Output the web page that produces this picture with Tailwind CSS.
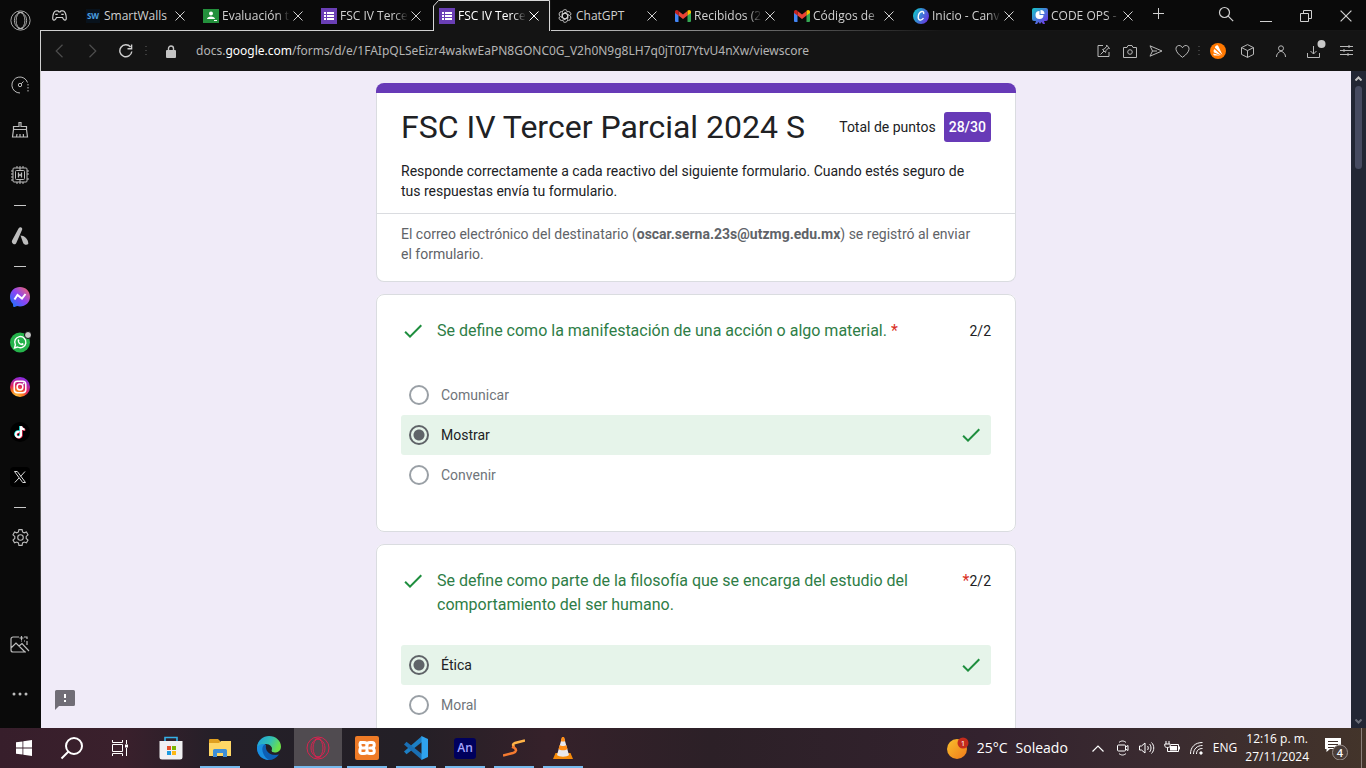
<!DOCTYPE html>
<html lang="es">
<head>
<meta charset="utf-8">
<title>FSC IV Tercer Parcial 2024 S</title>
<script src="https://cdn.jsdelivr.net/npm/@tailwindcss/browser@4"></script>
</head>
<body class="flex h-screen flex-col overflow-hidden bg-[#0a0a0a] font-['Open_Sans','Noto_Sans',sans-serif] text-xs text-[#d0d0d0]">

<!-- Shared symbols -->
<svg class="hidden" aria-hidden="true">
  <symbol id="close" viewBox="0 0 10 10"><path d="M.5.5l9 9M9.500.5l-9 9" fill="none" stroke="currentColor"/></symbol>
  <symbol id="forms" viewBox="0 0 16 16"><path fill="#6a3fb5" d="M0 0h16v16H0z"/><path fill="#fff" d="M3 4h2v2H3zM6 4h7v2H6zM3 7h2v2H3zM6 7h7v2H6zM3 10h2v2H3zM6 10h7v2H6z"/></symbol>
  <symbol id="gmail" viewBox="0 0 16 12"><path fill="#4285f4" d="M0 2v9a1 1 0 0 0 1 1h2.500V4.500z"/><path fill="#34a853" d="M16 2v9a1 1 0 0 1-1 1h-2.500V4.500z"/><path fill="#ea4335" d="M3.500 5.500V1L8 4.400 12.500 1v4.500L8 9z"/><path fill="#c5221f" d="M0 2C0 .2 1.900-.6 3.500.8v4.700L0 3z"/><path fill="#fbbc04" d="M16 2c0-1.800-1.900-2.600-3.500-1.200v4.700L16 3z"/></symbol>
  <symbol id="tick" viewBox="0 0 24 24"><path fill="#1e8e3e" d="M9 16.200 4.800 12l-1.400 1.400L9 19 21 7l-1.400-1.400z"/></symbol>
  <symbol id="opera" viewBox="0 0 24 24"><g fill="none" stroke="currentColor"><circle cx="12" cy="12" r="11"/><ellipse cx="12" cy="12" rx="5" ry="9"/><path d="M9 3.500C12.500.8 19 5 19 12s-6.500 11.200-10 8.500M15 3.500C11.500.8 5 5 5 12s6.500 11.200 10 8.500"/></g></symbol>
</svg>

<div class="flex min-h-0 flex-1">

  <!-- Browser sidebar -->
  <aside class="flex w-10 shrink-0 flex-col items-center text-[#bdbdbd]">
    <button aria-label="Opera" class="mb-[22px] grid h-10 place-items-center"><svg class="size-[21px]"><use href="#opera"/></svg></button>
    <button aria-label="GX Control" class="grid h-[45px] place-items-center"><svg class="size-[18px]" viewBox="0 0 18 18" fill="none" stroke="currentColor"><path d="M9 17A8 8 0 1 1 16.500 6.500"/><path d="M17 8v8" stroke-dasharray="1.500 1.500"/><circle cx="9" cy="9" r="1.700"/><path d="m10.200 7.800 2.300-2.300"/></svg></button>
    <button aria-label="GX Cleaner" class="grid h-[45px] place-items-center"><svg class="size-[18px]" viewBox="0 0 18 18" fill="none" stroke="currentColor" stroke-width="1.200"><path d="M2.500 8.500v-3H8v-4h2v4h5.500v3M2.500 8.500h13M2.500 8.500l-1 7.500h15l-1-7.500M5.500 16l.5-3M9 16v-3M12.500 16l-.2-3"/></svg></button>
    <button aria-label="Límites de recursos" class="grid h-[45px] place-items-center"><svg class="size-5" viewBox="0 0 20 20" fill="none" stroke="currentColor"><rect x="3" y="3" width="14" height="14" rx="1"/><rect x="5.500" y="5.500" width="9" height="9" rx="1"/><path d="M7 1v2M10 1v4M13 1v2M7 17v2M10 15v4M13 17v2M1 6h2M1 9h2M1 12h2M1 15h2M17 6h2M17 9h2M17 14h2"/><path d="M8.500 7.500v5M11.500 7.500v5M8.500 10h3" stroke-width="1.300"/></svg></button>
    <div class="grid h-4 place-items-center"><span class="h-px w-3 bg-[#c8c8c8]"></span></div>
    <button aria-label="Aria" class="grid h-[46px] place-items-center"><svg class="size-[18px]" viewBox="0 0 18 18" fill="#bdbdbd"><path d="M8.500.6c1.700-.9 3.200.5 2.600 2.200L5.300 16c-.8 1.800-2.800 1.700-4-.1-.6-.9-.6-1.600-.1-2.600L7.500 1.500z"/><path d="M9.500 8.500c3.500 0 8 3.400 7.800 8.600-1.500 1.300-4.300.9-5.200-1.300z"/></svg></button>
    <div class="grid h-[15px] place-items-center"><span class="h-px w-3 bg-[#c8c8c8]"></span></div>
    <button aria-label="Messenger" class="grid h-[45px] place-items-center"><svg class="size-5" viewBox="0 0 20 20"><defs><linearGradient id="ms" x1="0" y1="1" x2="1" y2="0"><stop offset="0" stop-color="#0a7cff"/><stop offset=".5" stop-color="#8b45f5"/><stop offset="1" stop-color="#ff6a5c"/></linearGradient></defs><path fill="url(#ms)" d="M10 0c5.600 0 10 4.100 10 9.700s-4.400 9.700-10 9.700c-1 0-2-.1-2.900-.4L4.500 20C3.300 20.300 3 19.500 3 17 1.100 15.300 0 12.700 0 9.700 0 4.100 4.400 0 10 0z"/><path fill="none" stroke="#fff" stroke-width="2" d="m4.500 12.500 3-4.500 4.500 3.500 3.500-4.500"/></svg></button>
    <button aria-label="WhatsApp" class="grid h-[45px] place-items-center"><svg class="size-[22px]" viewBox="0 0 22 22"><circle cx="11" cy="11.500" r="10" fill="#25b34b"/><path fill="none" stroke="#fff" stroke-width="1.400" d="m5.500 17 .9-3.200a5.600 5.600 0 1 1 2.200 2.200z"/><path fill="#fff" d="M8.800 8.500c.8-.8 1.200 0 1.600 1 .2.400-.5.900-.5 1.100.5 1 1.300 1.700 2.200 2.100.3 0 .7-1 1.200-.7 1.700.8 1.500 1 1 1.700-1.800 2-6.600-1.800-5.500-5.200z"/><circle cx="19" cy="4" r="3.500" fill="#c8c8c8" stroke="#0a0a0a"/></svg></button>
    <button aria-label="Instagram" class="grid h-[45px] place-items-center"><svg class="size-5" viewBox="0 0 20 20"><defs><radialGradient id="ig" cx=".3" cy="1" r="1"><stop offset="0" stop-color="#ffcf4a"/><stop offset=".35" stop-color="#fa7a1e"/><stop offset=".6" stop-color="#e0245e"/><stop offset="1" stop-color="#8a2be2"/></radialGradient></defs><circle cx="10" cy="10" r="10" fill="url(#ig)"/><g fill="none" stroke="#fff" stroke-width="1.500"><rect x="4.200" y="4.200" width="11.600" height="11.600" rx="3.200"/><circle cx="10" cy="10" r="2.900"/></g><circle cx="13.500" cy="6.500" r=".9" fill="#fff"/></svg></button>
    <button aria-label="TikTok" class="grid h-[45px] place-items-center"><svg class="size-5" viewBox="0 0 20 20"><circle cx="10" cy="10" r="10" fill="#000"/><g fill="none" stroke-width="2"><path stroke="#25f4ee" d="M9 9.500a2.700 2.700 0 1 0 1.200 4V4c.2 1.800 1.500 3 3.600 3.200"/><path stroke="#fe2c55" d="M10 10.500a2.700 2.700 0 1 0 1.700 3V4.700c.2 1.800 1.500 3 3.600 3.200"/><path stroke="#fff" d="M9.500 10a2.700 2.700 0 1 0 1.500 3.500V4.200c.2 1.800 1.500 3 3.600 3.200"/></g></svg></button>
    <button aria-label="X" class="grid h-[45px] place-items-center"><svg class="size-5" viewBox="0 0 20 20"><rect width="20" height="20" rx="4" fill="#000"/><path fill="none" stroke="#ddd" d="M4.500 4.500h2.800l8.200 11h-2.800zM15 4.500l-4.500 5M9 11l-4.200 4.500"/></svg></button>
    <div class="grid h-4 place-items-center"><span class="h-px w-3 bg-[#c8c8c8]"></span></div>
    <button aria-label="Configuración" class="grid h-[45px] place-items-center"><svg class="size-[19px]" viewBox="0 0 24 24" fill="none" stroke="currentColor" stroke-width="1.400"><circle cx="12" cy="12" r="3.500"/><path d="M10 2h4l.6 3 2 1.100 2.900-1 2 3.500-2.300 2v2.600l2.300 2-2 3.500-2.900-1-2 1.200-.6 3.100h-4l-.6-3.100-2-1.200-2.900 1-2-3.500 2.300-2v-2.600l-2.300-2 2-3.500 2.900 1L9.400 5z"/></svg></button>
    <div class="flex-1"></div>
    <button aria-label="Fondos" class="grid h-[45px] place-items-center"><svg class="size-5" viewBox="0 0 20 20" fill="none" stroke="currentColor" stroke-width="1.200"><path d="M9 2H3a2 2 0 0 0-2 2v11a2 2 0 0 0 2 2h13M1 13l5-5 9 9M9 11l3-2.500 7 7.500M11.500 1v4M9.500 3h4M14 2h3v2M17 6v4M11 6h1M14 6h1"/></svg></button>
    <button aria-label="Más" class="mb-[7px] grid h-[54px] place-items-center"><svg class="h-1 w-4" viewBox="0 0 16 4" fill="currentColor"><circle cx="2" cy="2" r="1.500"/><circle cx="8" cy="2" r="1.500"/><circle cx="14" cy="2" r="1.500"/></svg></button>
  </aside>

  <div class="flex min-w-0 flex-1 flex-col">

    <!-- Tab strip -->
    <nav aria-label="Pestañas" class="flex h-[31px] shrink-0 bg-[linear-gradient(to_right,#cfcfcf_38%,#161616_68%)] bg-[length:100%_1px] bg-bottom bg-no-repeat">
      <button aria-label="GX Corner" class="grid w-[39px] place-items-center"><svg class="h-[11px] w-[15px]" viewBox="0 0 15 11" fill="none" stroke="#cfcfcf" stroke-width="1.200"><path d="M4 .8h2l.8 1h1.400L9 .8h2c2 0 3.300 4.200 3.300 7.400 0 2.200-2 2.600-3 .8L10.500 7.500h-6L3.700 9c-1 1.800-3 1.400-3-.8C.7 5 2 .8 4 .8z"/><path d="M3.300 4.300h2.400M9.300 4.300h2.400"/></svg></button>

      <div class="flex w-[118px] items-center gap-[3px] pr-3 pl-1.5">
        <svg class="size-4 shrink-0" viewBox="0 0 16 16"><path fill="#08121c" d="M1 1h14v14H1z"/><text x="8" y="11" text-anchor="middle" font-family="Open Sans" font-size="8" font-weight="700" fill="#4a9fe0">SW</text></svg>
        <a href="#" class="w-[66px] overflow-hidden whitespace-nowrap">SmartWalls</a>
        <button aria-label="Cerrar" class="ml-auto"><svg class="size-2.5"><use href="#close"/></svg></button>
      </div>
      <div class="flex w-[118px] items-center gap-[3px] pr-3 pl-1.5">
        <svg class="size-4 shrink-0" viewBox="0 0 16 16"><path fill="#23903c" d="M0 1h16v14H0z"/><circle cx="8" cy="5.500" r="2" fill="#fff"/><path fill="#fff" d="M4 11c0-3.500 8-3.500 8 0zM11 12h3v1h-3z"/></svg>
        <a href="#" class="w-[70px] overflow-hidden mask-r-from-80% whitespace-nowrap">Evaluación t</a>
        <button aria-label="Cerrar" class="ml-auto"><svg class="size-2.5"><use href="#close"/></svg></button>
      </div>
      <div class="flex w-[118px] items-center gap-[3px] pr-3 pl-1.5">
        <svg class="size-4 shrink-0"><use href="#forms"/></svg>
        <a href="#" class="w-[70px] overflow-hidden mask-r-from-80% whitespace-nowrap">FSC IV Terce</a>
        <button aria-label="Cerrar" class="ml-auto"><svg class="size-2.5"><use href="#close"/></svg></button>
      </div>
      <div class="relative flex w-[118px] items-center gap-[3px] bg-[#141414] pr-3 pl-1.5 text-white">
        <svg class="absolute inset-0 h-[31px] w-[118px]" viewBox="0 0 118 31"><path fill="#0a0a0a" d="M0 0h6L0 6z"/><path fill="none" stroke="#d8d8d8" d="M.5 31V6l5-5.500h111V31"/></svg>
        <svg class="size-4 shrink-0"><use href="#forms"/></svg>
        <a href="#" aria-current="page" class="w-[70px] overflow-hidden mask-r-from-80% whitespace-nowrap">FSC IV Terce</a>
        <button aria-label="Cerrar" class="ml-auto"><svg class="size-2.5"><use href="#close"/></svg></button>
      </div>
      <div class="flex w-[118px] items-center gap-[3px] pr-3 pl-1.5">
        <svg class="size-4 shrink-0" viewBox="-1 -1 18 18" fill="none" stroke="#cfcfcf"><g id="petal"><path d="M5 9V4a3 3 0 0 1 5.500-1.800M5 6.300l3-1.800 3.500 2"/></g><use href="#petal" transform="rotate(60 8 8)"/><use href="#petal" transform="rotate(120 8 8)"/><use href="#petal" transform="rotate(180 8 8)"/><use href="#petal" transform="rotate(240 8 8)"/><use href="#petal" transform="rotate(300 8 8)"/></svg>
        <a href="#" class="w-[66px] overflow-hidden whitespace-nowrap">ChatGPT</a>
        <button aria-label="Cerrar" class="ml-auto"><svg class="size-2.5"><use href="#close"/></svg></button>
      </div>
      <div class="flex w-[118px] items-center gap-[3px] pr-3 pl-1.5">
        <svg class="h-3 w-4 shrink-0"><use href="#gmail"/></svg>
        <a href="#" class="w-[70px] overflow-hidden mask-r-from-80% whitespace-nowrap">Recibidos (2</a>
        <button aria-label="Cerrar" class="ml-auto"><svg class="size-2.5"><use href="#close"/></svg></button>
      </div>
      <div class="flex w-[118px] items-center gap-[3px] pr-[11px] pl-[7px]">
        <svg class="h-3 w-4 shrink-0"><use href="#gmail"/></svg>
        <a href="#" class="w-[70px] overflow-hidden mask-r-from-80% whitespace-nowrap">Códigos de</a>
        <button aria-label="Cerrar" class="ml-auto"><svg class="size-2.5"><use href="#close"/></svg></button>
      </div>
      <div class="flex w-[118px] items-center gap-[3px] pr-[9px] pl-2">
        <svg class="size-4 shrink-0" viewBox="0 0 16 16"><defs><linearGradient id="cv" x1="0" y1=".3" x2="1" y2=".8"><stop offset="0" stop-color="#12c4cc"/><stop offset="1" stop-color="#6c2be0"/></linearGradient></defs><circle cx="8" cy="8" r="8" fill="url(#cv)"/><path d="M10.500 6c.8-1.600-.2-2.700-1.600-2.500C6.500 3.900 5 7 5.200 9.500c.2 3.200 3.300 3.400 5.300.7" fill="none" stroke="#fff" stroke-width="1.400"/></svg>
        <a href="#" class="w-[70px] overflow-hidden mask-r-from-80% whitespace-nowrap">Inicio - Canv</a>
        <button aria-label="Cerrar" class="ml-auto"><svg class="size-2.5"><use href="#close"/></svg></button>
      </div>
      <div class="flex w-[118px] items-center gap-[3px] pr-2 pl-[9px]">
        <svg class="size-4 shrink-0" viewBox="0 0 16 16"><defs><linearGradient id="co" x1="0" y1="0" x2="1" y2="1"><stop offset="0" stop-color="#14c8c8"/><stop offset="1" stop-color="#7a2be8"/></linearGradient></defs><path fill="url(#co)" d="M2 0h12a2 2 0 0 1 2 2v9a2 2 0 0 1-2 2h-2l1 3h-2l-1.500-2-1.500 2-1.500-2L5 16H3l1-3H2a2 2 0 0 1-2-2V2a2 2 0 0 1 2-2z"/><path fill="#fff" d="M7.500 3v4h4a4 4 0 1 1-4-4zM8.500 2a4 4 0 0 1 4 4h-4z"/></svg>
        <a href="#" class="w-[70px] overflow-hidden mask-r-from-80% whitespace-nowrap">CODE OPS -</a>
        <button aria-label="Cerrar" class="ml-auto"><svg class="size-2.5"><use href="#close"/></svg></button>
      </div>
      <button aria-label="Nueva pestaña" class="grid w-[34px] place-items-center pb-1"><svg class="size-[11px]" viewBox="0 0 11 11" stroke="currentColor"><path d="M5.500 0v11M0 5.500h11"/></svg></button>
      <div class="ml-auto flex">
        <button aria-label="Buscar pestañas" class="grid w-10 place-items-center pb-1"><svg class="size-4" viewBox="0 0 16 16" fill="none" stroke="currentColor" stroke-width="1.200"><circle cx="6.500" cy="6.500" r="5"/><path d="m10.200 10.200 5 5"/></svg></button>
        <button aria-label="Minimizar" class="grid w-10 place-items-center"><svg class="size-3" viewBox="0 0 12 12" stroke="currentColor"><path d="M0 11.500h12"/></svg></button>
        <button aria-label="Restaurar" class="grid w-10 place-items-center"><svg class="size-3" viewBox="0 0 12 12" fill="none" stroke="currentColor"><path d="M.5 3.500h8v8h-8zM3.500 3.500v-3h8v8h-3"/></svg></button>
        <button aria-label="Cerrar ventana" class="grid w-10 place-items-center"><svg class="size-3"><use href="#close"/></svg></button>
      </div>
    </nav>

    <div class="flex min-h-0 flex-1">
      <div class="w-px shrink-0 bg-linear-to-b from-[#cfcfcf] from-5% via-[#8a8a8a] via-60% to-[#0a0a0a] to-90%"></div>
      <div class="flex min-w-0 flex-1 flex-col">

        <!-- Address bar -->
        <header class="flex h-10 shrink-0 items-center bg-[#141414]">
          <div class="flex items-center pl-3.5">
            <button aria-label="Atrás" class="mr-[26px] text-[#4d4d4d]"><svg class="h-3.5 w-2" viewBox="0 0 8 14" fill="none" stroke="currentColor" stroke-width="1.200"><path d="M7.500.8 1.200 7l6.300 6.200"/></svg></button>
            <button aria-label="Adelante" class="mr-[22px] text-[#4d4d4d]"><svg class="h-3.5 w-2" viewBox="0 0 8 14" fill="none" stroke="currentColor" stroke-width="1.200"><path d="M.5.8 6.800 7 .5 13.200"/></svg></button>
            <button aria-label="Recargar"><svg class="size-[14px]" viewBox="0 0 14 14" fill="none" stroke="currentColor" stroke-width="1.400"><path d="M12.800 7.500A6 6 0 1 1 11.500 3M12.600.5v4.200H8.500"/></svg></button>
            <svg class="ml-3 h-3 w-0.5" viewBox="0 0 2 12" fill="#3c3c3c"><path d="M0 1h2v1H0zM0 5h2v1H0zM0 9h2v1H0z"/></svg>
            <svg class="mr-5 ml-[19px] h-[13px] w-2.5" viewBox="0 0 10 13"><path fill="none" stroke="#c4c4c4" stroke-width="1.400" d="M2.500 6V3.500a2.500 2.500 0 0 1 5 0V6"/><rect y="5" width="10" height="8" rx="1" fill="#c4c4c4"/></svg>
          </div>
          <div class="min-w-0 flex-1 font-['Noto_Sans','Open_Sans',sans-serif] whitespace-nowrap text-[#b4b4b4]">docs.<span class="text-white">google.com</span>/forms/d/e/1FAIpQLSeEizr4wakwEaPN8GONC0G_V2h0N9g8LH7q0jT0I7YtvU4nXw/viewscore</div>
          <div class="flex items-center text-[#b9b9b9]">
            <button aria-label="Anclar" class="grid w-[26px] place-items-center"><svg class="size-3.5" viewBox="0 0 14 14" fill="none" stroke="currentColor"><path d="M6 1.500H1v11h11V8M3.500 10.500 7 7M5.500 5.500l3 3 .5-2L11.500 4l1 .5-3-3.500.3 1.200L7.300 5z"/></svg></button>
            <button aria-label="Captura" class="grid w-[26px] place-items-center"><svg class="h-[13px] w-3.5" viewBox="0 0 14 13" fill="none" stroke="currentColor"><path d="M.5 2.500H4l1-2h4l1 2h3.500v10H.5z"/><circle cx="7" cy="7" r="2.300"/></svg></button>
            <button aria-label="Mi Flow" class="grid w-[26px] place-items-center"><svg class="h-3 w-3.5" viewBox="0 0 14 12" fill="none" stroke="currentColor"><path d="M1 .8 13 6 1 11.200 3.500 6zM3.500 6H8"/></svg></button>
            <button aria-label="Favorito" class="grid w-[26px] place-items-center"><svg class="h-[13px] w-[15px]" viewBox="0 0 15 13" fill="none" stroke="currentColor"><path d="M7.500 12.300C-2 5.800.8.5 4 .5c1.700 0 2.900 1 3.500 2.300C8.100 1.500 9.300.5 11 .5c3.200 0 6 5.300-3.500 11.800z"/></svg></button>
            <svg class="mr-2.5 ml-[3px] h-3 w-0.5" viewBox="0 0 2 12" fill="#3c3c3c"><path d="M0 1h2v1H0zM0 5h2v1H0zM0 9h2v1H0z"/></svg>
            <button aria-label="Avast"><svg class="size-4" viewBox="0 0 16 16"><circle cx="8" cy="8" r="8" fill="#ff7800"/><path fill="#fff" d="M6.500 2.500c.9-.6 1.700.2 2 1L12.500 12 5 4.800c-.2-.8.3-1.700 1.500-2.300zM4.500 6l7 6.500-7.500-3C3.300 8 3.500 6.700 4.500 6zM3.500 10.500l7 2H4.500c-.9 0-1.400-1-1-2z"/></svg></button>
            <button aria-label="Extensiones" class="ml-[15px]"><svg class="h-3.5 w-[13px]" viewBox="0 0 13 14" fill="none" stroke="currentColor"><path d="m6.500.6 6 3v6.800l-6 3-6-3V3.600zM.5 3.600l6 3 6-3M6.500 6.600v6.800"/></svg></button>
            <button aria-label="Perfil" class="ml-[22px]"><svg class="h-3 w-2.5" viewBox="0 0 10 12" fill="none" stroke="currentColor"><circle cx="5" cy="3.300" r="2.500"/><path d="M.5 12C.5 9 2 7.500 5 6c3 1.500 4.500 3 4.500 6"/></svg></button>
            <button aria-label="Descargas" class="ml-5 pb-1"><svg class="h-5 w-[20px]" viewBox="0 0 20 20" fill="none" stroke="currentColor"><path d="M1.500 14v4.500h12V14M7.500 7v8M4.500 12l3 3 3-3"/><circle cx="15.500" cy="5" r="4" fill="#c8c8c8" stroke="none"/></svg></button>
            <button aria-label="Ajustes rápidos" class="mr-[13px] ml-[14px]"><svg class="h-3 w-[13px]" viewBox="0 0 13 12" fill="none" stroke="currentColor"><path d="M0 1.500h13M0 5.500h13M0 9.500h13M9 0v3M4 4v3M8 8v3"/></svg></button>
          </div>
        </header>

        <!-- Page -->
        <div class="flex min-h-0 flex-1 bg-[#f0ebf8]">
          <main class="relative min-w-0 flex-1 overflow-hidden font-[Roboto,sans-serif] text-sm text-[#202124]">
            <form class="mx-auto flex w-full max-w-[640px] flex-col gap-3 pt-3">

              <section>
                <div class="h-2.5 rounded-t-lg bg-[#673ab7]"></div>
                <div class="rounded-b-lg border border-t-0 border-[#dadce0] bg-white">
                  <div class="border-b border-[#dadce0] px-6 pt-3.5 pb-3">
                    <div class="flex h-10 items-center">
                      <h1 class="flex-1 text-[32px] leading-10">FSC IV Tercer Parcial 2024 S</h1>
                      <span class="mr-2">Total de puntos</span>
                      <span class="rounded-[3px] bg-[#673ab7] px-[5px] py-[5px] leading-5 font-medium text-white">28/30</span>
                    </div>
                    <p class="mt-3.5 pr-5 leading-5">Responde correctamente a cada reactivo del siguiente formulario. Cuando estés seguro de tus respuestas envía tu formulario.</p>
                  </div>
                  <p class="pt-2.5 pr-11 pb-[17px] pl-6 leading-5 text-[#5f6368]">El correo electrónico del destinatario (<b>oscar.serna.23s@utzmg.edu.mx</b>) se registró al enviar el formulario.</p>
                </div>
              </section>

              <fieldset class="rounded-lg border border-[#dadce0] bg-white px-6 pt-6 pb-9">
                <div class="flex min-h-7 items-start">
                  <svg class="mr-3 size-6 shrink-0" role="img" aria-label="Correcta"><use href="#tick"/></svg>
                  <h2 class="flex-1 text-base text-[#2e7d46]">Se define como la manifestación de una acción o algo material. <span class="text-[#d93025]">*</span></h2>
                  <span class="leading-6">2/2</span>
                </div>
                <div class="mt-7">
                  <label class="flex h-10 items-center gap-3 px-2 text-[#70757a]"><input type="radio" name="q1" disabled class="size-5 appearance-none rounded-full border-2 border-[#9aa0a6]">Comunicar</label>
                  <label class="flex h-10 items-center gap-3 rounded-[3px] bg-[#e6f4ea] px-2"><input type="radio" name="q1" checked disabled class="size-5 appearance-none rounded-full border-2 border-[#5f6368] bg-[radial-gradient(circle,#5f6368_5px,transparent_6px)]">Mostrar<svg class="ml-auto size-6"><use href="#tick"/></svg></label>
                  <label class="flex h-10 items-center gap-3 px-2 text-[#70757a]"><input type="radio" name="q1" disabled class="size-5 appearance-none rounded-full border-2 border-[#9aa0a6]">Convenir</label>
                </div>
              </fieldset>

              <fieldset class="rounded-lg border border-[#dadce0] bg-white px-6 pt-6 pb-9">
                <div class="flex min-h-7 items-start">
                  <svg class="mr-3 size-6 shrink-0" role="img" aria-label="Correcta"><use href="#tick"/></svg>
                  <h2 class="flex-1 text-base text-[#2e7d46]">Se define como parte de la filosofía que se encarga del estudio del comportamiento del ser humano.</h2>
                  <span class="ml-10 leading-6"><span class="text-base text-[#d93025]">*</span>2/2</span>
                </div>
                <div class="mt-7">
                  <label class="flex h-10 items-center gap-3 rounded-[3px] bg-[#e6f4ea] px-2"><input type="radio" name="q2" checked disabled class="size-5 appearance-none rounded-full border-2 border-[#5f6368] bg-[radial-gradient(circle,#5f6368_5px,transparent_6px)]">Ética<svg class="ml-auto size-6"><use href="#tick"/></svg></label>
                  <label class="flex h-10 items-center gap-3 px-2 text-[#70757a]"><input type="radio" name="q2" disabled class="size-5 appearance-none rounded-full border-2 border-[#9aa0a6]">Moral</label>
                </div>
              </fieldset>
            </form>
            <button aria-label="Informar de un problema" class="absolute bottom-[18px] left-3.5"><svg class="size-5" viewBox="0 0 20 20"><path fill="#706d76" d="M1.500 0h17A1.500 1.500 0 0 1 20 1.500v13a1.500 1.500 0 0 1-1.500 1.500H4l-4 4V1.500A1.500 1.500 0 0 1 1.500 0z"/><path fill="#fff" d="M9 4h2v4H9zM9 10h2v2H9z"/></svg></button>
          </main>

          <!-- Scrollbar -->
          <div class="flex w-[15px] shrink-0 flex-col items-center bg-[#222634] pt-[5px] pb-1">
            <svg class="h-[5px] w-[7px]" viewBox="0 0 7 5" fill="none" stroke="#c0c0c0" stroke-width="2"><path d="m.5 4.500 3-3 3 3"/></svg>
            <div class="mt-[5px] h-[83px] w-[7px] rounded-full bg-[#464a60]"></div>
            <svg class="mt-auto h-[5px] w-[7px]" viewBox="0 0 7 5" fill="none" stroke="#6a6d78" stroke-width="2"><path d="m.5.5 3 3 3-3"/></svg>
          </div>
        </div>
      </div>
    </div>
  </div>
</div>

<!-- Windows taskbar -->
<footer class="flex h-10 shrink-0 items-center bg-[linear-gradient(to_right,#371e2b_0%,#3a202c_9%,#241f28_16%,#231f26_30%,#35212a_40%,#2c2027_52%,#33222e_72%,#3a2b30_85%,#43342a_100%)] text-white">
  <div class="flex h-full">
    <button aria-label="Inicio" class="grid w-12 place-items-center"><svg class="size-4" viewBox="0 0 16 16" fill="#fff"><path d="M0 2.300 6.500 1.400v6.200H0zM7.300 1.200 16 0v7.600H7.300zM0 8.400h6.500v6.200L0 13.700zM7.300 8.400H16V16l-8.700-1.200z"/></svg></button>
    <button aria-label="Buscar" class="grid w-12 place-items-center"><svg class="size-6" viewBox="0 0 24 24" fill="none" stroke="#fff" stroke-width="2"><circle cx="14" cy="10" r="8"/><path d="M8.500 15.500 1.500 22.500"/></svg></button>
    <button aria-label="Vista de tareas" class="mr-[3px] grid w-12 place-items-center"><svg class="size-4" viewBox="0 0 16 16" fill="none" stroke="#fff"><path d="M.5 0v2.500h10V0M.5 16v-2.500h10V16M.5 4.500h10v7H.5zM14.500 0v4M14.500 8v8"/><path d="M13 4.500h3v3h-3z" fill="#fff" stroke="none"/></svg></button>
  </div>
  <div class="flex h-full gap-px">
    <button aria-label="Microsoft Store" class="grid w-12 place-items-center"><svg class="size-6" viewBox="0 0 24 24"><path fill="none" stroke="#35b1e8" stroke-width="1.600" d="M6 6V1.500h12V6"/><path fill="#f0f0f2" d="M.5 5h23v16a2.500 2.500 0 0 1-2.500 2.500H3A2.500 2.500 0 0 1 .5 21z"/><path fill="#e5502a" d="M8 10h4v4H8z"/><path fill="#7db700" d="M13 10h4v4h-4z"/><path fill="#1c9be0" d="M8 15h4v4H8z"/><path fill="#fdb813" d="M13 15h4v4h-4z"/></svg></button>
    <button aria-label="Explorador de archivos" class="grid w-12 grid-rows-[1fr_2px] place-items-center"><svg class="mt-0.5 size-[22px]" viewBox="0 0 22 22"><path fill="#e0a020" d="M0 3a1 1 0 0 1 1-1h8l2 2v3H0z"/><path fill="#ffd766" d="M0 6h10l2-2h10v15H0z"/><path fill="#3f8fd8" d="M4 20v-6.500A1.500 1.500 0 0 1 5.500 12h11a1.500 1.500 0 0 1 1.500 1.500V20h-4v-4H8v4z"/></svg><span class="h-0.5 w-10 bg-[#76b9ed]"></span></button>
    <button aria-label="Edge" class="grid w-12 place-items-center"><svg class="size-6" viewBox="0 0 24 24"><defs><linearGradient id="e1" x1="0" y1="0" x2="1" y2=".4"><stop offset="0" stop-color="#1b9de2"/><stop offset=".6" stop-color="#35c1b0"/><stop offset="1" stop-color="#6be04a"/></linearGradient></defs><path fill="#0d5fb4" d="M0 12c0-3 1-6 3-8l6 5c-1 6 3 11 13 9.500C19.500 22 16 24 12 24 5 24 0 19 0 12z"/><path fill="url(#e1)" d="M0 11C.8 4.500 6 0 12 0c7 0 12 5 12 10.500 0 4-3 6-6.500 6-3 0-4-1.200-3-2.500C16 11.500 13 8 9 8c-4 0-7 1.500-9 3z"/><path fill="#1a8fe0" d="M0 11c2-2.500 5-3.500 8-3-3 2-3.500 6-1.500 10 1 2.500 3 4.500 5.500 6C5 24-.5 18 0 11z"/><path fill="#242027" d="M11 10c-1.500 4 .5 8 5 8.500 2.500.3 4.500-.5 6.500-2-2.500 1.300-8.500.5-8-2.500 1-1.500 0-4-3.500-4z"/></svg></button>
    <button aria-label="Opera GX" class="grid w-12 grid-rows-[1fr_2px] place-items-center bg-[#504b50] text-[#d8234f]"><svg class="mt-0.5 size-6"><use href="#opera"/></svg><span class="h-0.5 w-12 bg-[#76b9ed]"></span></button>
    <button aria-label="XAMPP" class="grid w-12 grid-rows-[1fr_2px] place-items-center"><svg class="mt-0.5 size-6" viewBox="0 0 24 24"><rect width="24" height="24" rx="2" fill="#ee7a26"/><path fill="none" stroke="#fff" stroke-width="3" stroke-linejoin="round" stroke-linecap="round" d="M5.500 6.500H9c2 0 3 1 3 2.500S11 12 9 12H6.500c-2 0-2.500 5.500 0 5.500H9c2 0 3-1 3-2.500v-6c0-1.500 1-2.500 3-2.500h2c3 0 3 5 0 5.500h-2M17 12c3 .5 3 5.500 0 5.500h-2c-2 0-3-1-3-2.500M5.500 6.500C4.500 8.500 5 11 6.500 12"/></svg><span class="h-0.5 w-10 bg-[#76b9ed]"></span></button>
    <button aria-label="Visual Studio Code" class="grid w-12 grid-rows-[1fr_2px] place-items-center"><svg class="mt-0.5 size-6" viewBox="0 0 24 24"><path fill="#1d7fc4" d="M18 0 0 15.500l2.500 2.800L18 6z"/><path fill="#1a6fb4" d="M18 24 0 8.500l2.500-2.800L18 18z"/><path fill="#2fa3ee" d="M17.500 0 24 3v18l-6.500 3z"/></svg><span class="h-0.5 w-10 bg-[#76b9ed]"></span></button>
    <button aria-label="Adobe Animate" class="grid w-12 grid-rows-[1fr_2px] place-items-center"><span class="mt-0.5 grid h-[21px] w-[22px] place-items-center rounded-[3px] bg-[#00005c] font-semibold text-[#a6a4ff]">An</span><span class="h-0.5 w-10 bg-[#76b9ed]"></span></button>
    <button aria-label="Sublime Text" class="grid w-12 grid-rows-[1fr_2px] place-items-center"><svg class="mt-0.5 h-[18px] w-[22px]" viewBox="0 0 22 18" fill="none"><path stroke="#ffb347" stroke-width="2.600" d="M22 1.500 12 4c-2.500.8-2.500 3-.5 4"/><path stroke="#f47a30" stroke-width="2.600" d="M0 16.500 10 14c3.500-1 4-3.500 1-5.500l-2-.8"/></svg><span class="h-0.5 w-10 bg-[#76b9ed]"></span></button>
    <button aria-label="VLC" class="grid w-12 grid-rows-[1fr_2px] place-items-center"><svg class="mt-0.5 h-[22px] w-5" viewBox="0 0 20 22"><path fill="#f58a0a" d="M2.500 16h15l2.500 6H0z"/><path fill="#e8e8ec" d="M9 .5h2L16 18c-2 2.300-10 2.300-12 0z"/><path fill="#ff8c14" d="M9 0h2l1.200 4c-1 .8-3.400.8-4.400 0zM6.700 8c1.500 1.300 5.100 1.300 6.600 0l1.200 4c-2 1.700-7 1.700-9 0z"/></svg><span class="h-0.5 w-10 bg-[#76b9ed]"></span></button>
  </div>

  <div class="ml-auto flex h-full items-center">
    <button class="flex items-center gap-2 text-sm"><svg class="h-[22px] w-[22px]" viewBox="0 0 22 22"><defs><linearGradient id="sun" x1="0" y1="0" x2="1" y2="1"><stop offset="0" stop-color="#f9bf2c"/><stop offset="1" stop-color="#ef7a1a"/></linearGradient></defs><circle cx="10" cy="12" r="10" fill="url(#sun)"/><circle cx="16" cy="6" r="5.500" fill="#c42b1c"/><text x="16" y="9" text-anchor="middle" font-family="Open Sans" font-size="8" fill="#fff">1</text></svg><span class="flex gap-2"><span>25°C</span><span>Soleado</span></span></button>
    <button aria-label="Mostrar iconos ocultos" class="ml-6"><svg class="h-[7px] w-3" viewBox="0 0 12 7" fill="none" stroke="#fff" stroke-width="1.200"><path d="m.5 6.500L6 1l5.500 5.500"/></svg></button>
    <div class="ml-[11px] flex items-center gap-2">
      <svg class="h-4 w-4" viewBox="0 0 16 16" fill="none" stroke="#fff"><path d="M4 2.500C6 .5 9 .5 11 2.500M4 13.500c2 2 5 2 7 0"/><rect x="2.500" y="5" width="8" height="6" rx="1"/><path d="m10.500 7 2.500-1.500v5L10.500 9z"/></svg>
      <svg class="h-4 w-[17px]" viewBox="0 0 17 16" fill="none" stroke="#fff"><path d="M.5 6h2L6 3v10L2.500 10h-2zM8.500 6c1 1 1 3 0 4M10.500 4c2 2 2 6 0 8M12.500 2.500c3 3 3 8 0 11"/></svg>
      <svg class="h-3.5 w-4" viewBox="0 0 16 14" fill="none" stroke="#fff"><path d="M2 0v3M5 0v3M.8 3h5.400v2c0 2-5.400 2-5.400 0zM3.500 6.500v4H5M7 3.500h7.500v7h-10"/><path fill="#fff" stroke="none" d="M6 5h7v4.500H6zM15 5.500h1v3h-1z"/></svg>
      <svg class="ml-0.5 h-3.5 w-[13px]" viewBox="0 0 13 14" fill="none" stroke="#fff"><path d="M.5 13C.5 6 5 1.500 12.500 1.500M3.500 13c0-5 3.500-8.500 9-8.500M6.500 13c0-3.500 2-5.500 6-5.500"/><circle cx="11" cy="12" r="1.200" fill="#fff"/></svg>
    </div>
    <span class="ml-2.5">ENG</span>
    <div class="ml-2 text-center leading-[18px]"><div>12:16 p. m.</div><div>27/11/2024</div></div>
    <button aria-label="4 notificaciones" class="ml-4"><svg class="size-6" viewBox="0 0 24 24"><path fill="#fff" d="M0 2h16v11H5l-3.500 3V13H0z"/><path stroke="#3f2f2a" d="M3 5.500h10M3 8.500h10M3 11.500h7"/><circle cx="15" cy="16.500" r="7.500" fill="#4a3d38" stroke="#9a908c"/><text x="15" y="20.500" text-anchor="middle" font-family="Open Sans" font-size="11" font-weight="600" fill="#fff">4</text></svg></button>
    <div class="mr-1 ml-3 h-full w-px bg-[#8a7f7a]"></div>
  </div>
</footer>
</body>
</html>
